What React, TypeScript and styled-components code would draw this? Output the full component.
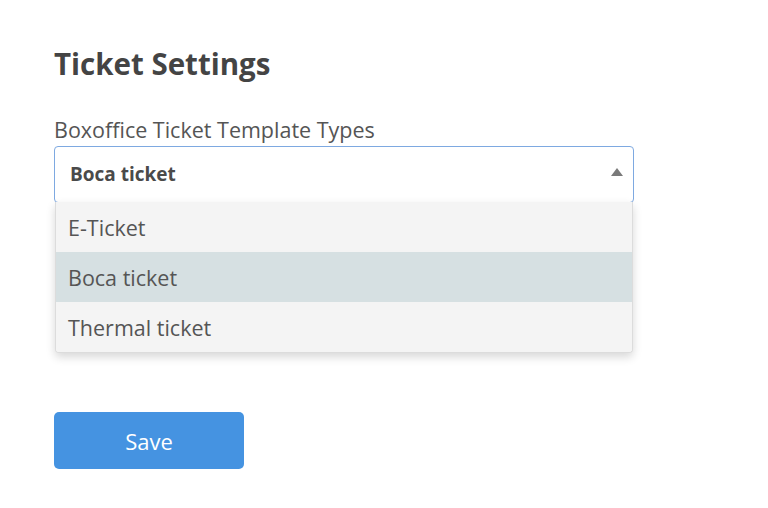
import styled, { createGlobalStyle } from 'styled-components';

const options = ['E-Ticket', 'Boca ticket', 'Thermal ticket'];
const selected = 'Boca ticket';

export default function App() {
  return (
    <>
      <GlobalStyle />
      <Page>
        <Title>Ticket Settings</Title>
        <Field>
          <Label>Boxoffice Ticket Template Types</Label>
          <SelectWrap>
            <SelectBox>
              <SelectedText>{selected}</SelectedText>
              <Caret />
            </SelectBox>
            <Menu>
              {options.map((opt) => (
                <Option key={opt} active={opt === selected}>
                  {opt}
                </Option>
              ))}
            </Menu>
          </SelectWrap>
        </Field>
        <SaveButton>Save</SaveButton>
      </Page>
    </>
  );
}

const GlobalStyle = createGlobalStyle`
  body {
    margin: 0;
    background: #ffffff;
    font-family: "Open Sans", "Noto Sans", sans-serif;
  }
`;

const Page = styled.div`
  display: flex;
  flex-direction: column;
  align-items: flex-start;
  padding: 44px 0 0 54px;
  width: 580px;
`;

const Title = styled.h1`
  margin: 0;
  font-size: 29.5px;
  line-height: 40px;
  font-weight: 700;
  color: #444444;
`;

const Field = styled.div`
  display: flex;
  flex-direction: column;
  width: 100%;
  margin-top: 33px;
`;

const Label = styled.label`
  font-size: 21.5px;
  line-height: 26px;
  color: #555555;
  margin-bottom: 3px;
`;

const SelectBox = styled.div`
  box-sizing: border-box;
  display: flex;
  align-items: center;
  justify-content: space-between;
  height: 57px;
  padding: 0 10px 2px 15px;
  border: 1px solid #7ea9e1;
  border-radius: 4px;
  background: #ffffff;
`;

const SelectWrap = styled.div`
  position: relative;
  width: 100%;
`;

const SelectedText = styled.span`
  font-size: 19px;
  font-weight: 700;
  color: #4a4a4a;
`;

const Caret = styled.span`
  width: 0;
  height: 0;
  margin-bottom: 3px;
  border-left: 6px solid transparent;
  border-right: 6px solid transparent;
  border-bottom: 8px solid #7a7a7a;
`;

const Menu = styled.div`
  position: absolute;
  top: 56px;
  left: 1px;
  right: 1px;
  display: flex;
  flex-direction: column;
  background: #f4f4f4;
  border: 1px solid #dcdcdc;
  border-top: none;
  border-radius: 0 0 4px 4px;
  box-shadow: 0 4px 10px rgba(0, 0, 0, 0.16);
  overflow: hidden;
`;

const Option = styled.div<{ active?: boolean }>`
  display: flex;
  align-items: center;
  height: 50px;
  padding: 0 0 0 12px;
  font-size: 21.5px;
  color: #555555;
  background: ${(p) => (p.active ? '#d6e0e2' : '#f4f4f4')};
`;

const SaveButton = styled.button`
  margin-top: 209px;
  width: 190px;
  height: 57px;
  border: none;
  border-radius: 5px;
  background: #4593e1;
  color: #ffffff;
  font-family: "Open Sans", "Noto Sans", sans-serif;
  font-size: 22px;
  padding: 0;
`;
